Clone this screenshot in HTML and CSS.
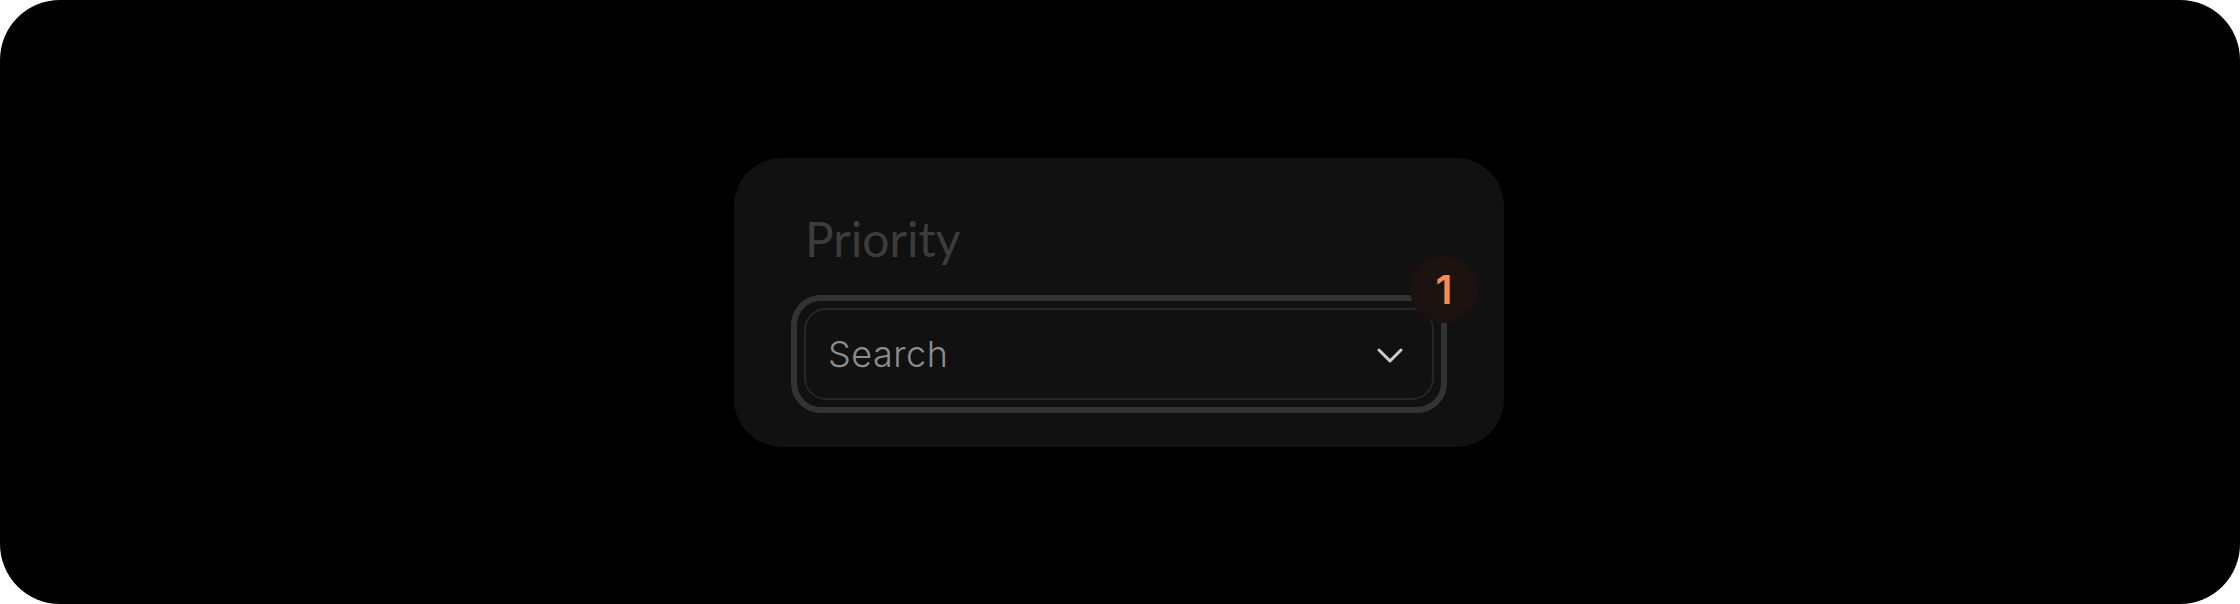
FILE: index.html
```html
<!DOCTYPE html>
<html lang="en">
<head>
<meta charset="utf-8">
<title>Priority</title>
<link rel="stylesheet" href="styles.css">
</head>
<body>
<div class="stage">
  <div class="card">
    <div class="label">Priority</div>
    <div class="field">
      <div class="field-inner">
        <span class="placeholder">Search</span>
        <svg class="chevron" width="28" height="18" viewBox="0 0 28 18" aria-hidden="true">
          <polyline points="3,3 14,14 25,3" fill="none" stroke="#cccccc" stroke-width="3" stroke-linecap="round" stroke-linejoin="round"/>
        </svg>
      </div>
      <div class="badge">1</div>
    </div>
  </div>
</div>
</body>
</html>
```

FILE: styles.css
```css
html, body {
  margin: 0;
  padding: 0;
  background: #ffffff;
}
.stage {
  width: 2240px;
  height: 604px;
  background: #000000;
  border-radius: 60px;
  display: flex;
  justify-content: center;
  align-items: flex-start;
  box-sizing: border-box;
  padding-top: 158px;
  padding-right: 2px;
}
.card {
  width: 770px;
  height: 289px;
  box-sizing: border-box;
  background: #111111;
  border-radius: 48px;
  padding: 57px 57px 0 57px;
  display: flex;
  flex-direction: column;
}
.label {
  font-family: "Lato", "Liberation Sans", sans-serif;
  font-size: 48px;
  line-height: 47px;
  height: 47px;
  color: #3c3c3c;
  padding-left: 14px;
  margin-bottom: 33px;
}
.field {
  position: relative;
  height: 118px;
  box-sizing: border-box;
  border: 6px solid #333333;
  border-radius: 30px;
  padding: 7px;
}
.field-inner {
  height: 100%;
  box-sizing: border-box;
  border: 2.5px solid #262626;
  border-radius: 22px;
  display: flex;
  align-items: center;
  justify-content: space-between;
  padding: 0 28px 0 22px;
}
.placeholder {
  font-family: "Inter", "Liberation Sans", sans-serif;
  font-weight: 300;
  font-size: 36px;
  color: #8c8c8c;
  letter-spacing: 0.5px;
}
.chevron {
  display: block;
  margin-top: 3px;
}
.badge {
  position: absolute;
  top: -46px;
  right: -37px;
  width: 68px;
  height: 68px;
  border-radius: 50%;
  background: #1c1310;
  color: #f38d55;
  font-family: "Inter", "Liberation Sans", sans-serif;
  font-weight: 600;
  font-size: 40px;
  display: flex;
  align-items: center;
  justify-content: center;
}
```
